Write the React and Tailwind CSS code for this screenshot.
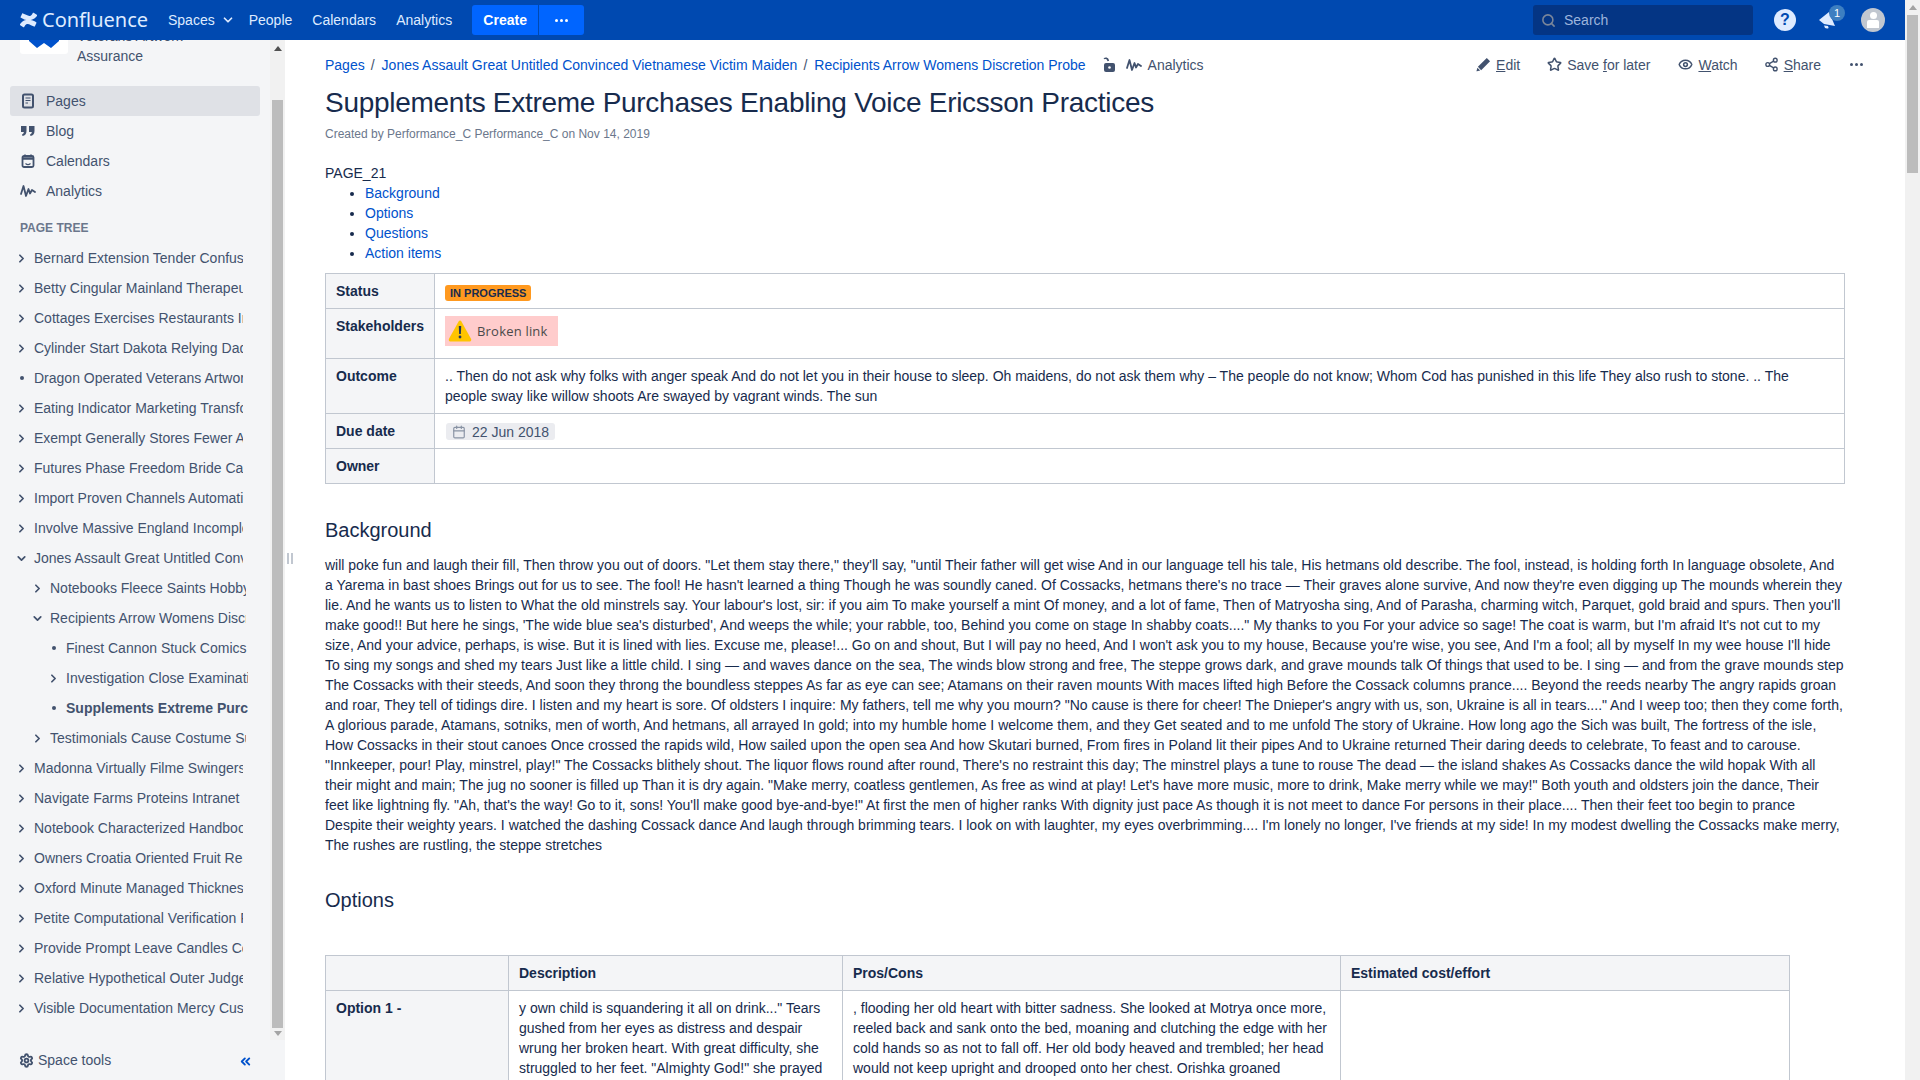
import React from "react";
import { ChevronRight, ChevronDown, Search, Star, Eye, Share2, ChevronsLeft, Settings, Calendar } from "lucide-react";

const tree = [
  { label: "Bernard Extension Tender Confusion Rates", kind: "closed", depth: 0 },
  { label: "Betty Cingular Mainland Therapeutic Heads", kind: "closed", depth: 0 },
  { label: "Cottages Exercises Restaurants Inquiry Ways", kind: "closed", depth: 0 },
  { label: "Cylinder Start Dakota Relying Dads Ordered", kind: "closed", depth: 0 },
  { label: "Dragon Operated Veterans Artwork Assurance", kind: "leaf", depth: 0 },
  { label: "Eating Indicator Marketing Transform Parts", kind: "closed", depth: 0 },
  { label: "Exempt Generally Stores Fewer Agents Wave", kind: "closed", depth: 0 },
  { label: "Futures Phase Freedom Bride Cable Gardens", kind: "closed", depth: 0 },
  { label: "Import Proven Channels Automatic Receipts", kind: "closed", depth: 0 },
  { label: "Involve Massive England Incomplete Circles", kind: "closed", depth: 0 },
  { label: "Jones Assault Great Untitled Convinced Vietnamese", kind: "open", depth: 0 },
  { label: "Notebooks Fleece Saints Hobby Lessons Bank", kind: "closed", depth: 1 },
  { label: "Recipients Arrow Womens Discretion Probe", kind: "open", depth: 1 },
  { label: "Finest Cannon Stuck Comics Traveling", kind: "leaf", depth: 2 },
  { label: "Investigation Close Examination Parents", kind: "closed", depth: 2 },
  { label: "Supplements Extreme Purchases Enabling", kind: "leaf", depth: 2, bold: true },
  { label: "Testimonials Cause Costume Surely Towers", kind: "closed", depth: 1 },
  { label: "Madonna Virtually Filme Swingers Harvest", kind: "closed", depth: 0 },
  { label: "Navigate Farms Proteins Intranet Chambers", kind: "closed", depth: 0 },
  { label: "Notebook Characterized Handbook Outlined", kind: "closed", depth: 0 },
  { label: "Owners Croatia Oriented Fruit Reaches Tile", kind: "closed", depth: 0 },
  { label: "Oxford Minute Managed Thickness Cooling", kind: "closed", depth: 0 },
  { label: "Petite Computational Verification Floors", kind: "closed", depth: 0 },
  { label: "Provide Prompt Leave Candles Corners Mint", kind: "closed", depth: 0 },
  { label: "Relative Hypothetical Outer Judges Shelf", kind: "closed", depth: 0 },
  { label: "Visible Documentation Mercy Custom Roads", kind: "closed", depth: 0 },
];

const depthClass = ["pl-[14px] w-[243px]", "pl-[30px] w-[246px]", "pl-[46px] w-[248px]"];

const body =
  `will poke fun and laugh their fill, Then throw you out of doors. "Let them stay there," they'll say, "until Their father will get wise And in our language tell his tale, His hetmans old describe. The fool, instead, is holding forth In language obsolete, And a Yarema in bast shoes Brings out for us to see. The fool! He hasn't learned a thing Though he was soundly caned. Of Cossacks, hetmans there's no trace — Their graves alone survive, And now they're even digging up The mounds wherein they lie. And he wants us to listen to What the old minstrels say. Your labour's lost, sir: if you aim To make yourself a mint Of money, and a lot of fame, Then of Matryosha sing, And of Parasha, charming witch, Parquet, gold braid and spurs. Then you'll make good!! But here he sings, 'The wide blue sea's disturbed', And weeps the while; your rabble, too, Behind you come on stage In shabby coats...." My thanks to you For your advice so sage! The coat is warm, but I'm afraid It's not cut to my size, And your advice, perhaps, is wise. But it is lined with lies. Excuse me, please!... Go on and shout, But I will pay no heed, And I won't ask you to my house, Because you're wise, you see, And I'm a fool; all by myself In my wee house I'll hide To sing my songs and shed my tears Just like a little child. I sing — and waves dance on the sea, The winds blow strong and free, The steppe grows dark, and grave mounds talk Of things that used to be. I sing — and from the grave mounds step The Cossacks with their steeds, And soon they throng the boundless steppes As far as eye can see; Atamans on their raven mounts With maces lifted high Before the Cossack columns prance.... Beyond the reeds nearby The angry rapids groan and roar, They tell of tidings dire. I listen and my heart is sore. Of oldsters I inquire: My fathers, tell me why you mourn? "No cause is there for cheer! The Dnieper's angry with us, son, Ukraine is all in tears...." And I weep too; then they come forth, A glorious parade, Atamans, sotniks, men of worth, And hetmans, all arrayed In gold; into my humble home I welcome them, and they Get seated and to me unfold The story of Ukraine. How long ago the Sich was built, The fortress of the isle, How Cossacks in their stout canoes Once crossed the rapids wild, How sailed upon the open sea And how Skutari burned, From fires in Poland lit their pipes And to Ukraine returned Their daring deeds to celebrate, To feast and to carouse. "Innkeeper, pour! Play, minstrel, play!" The Cossacks blithely shout. The liquor flows round after round, There's no restraint this day; The minstrel plays a tune to rouse The dead — the island shakes As Cossacks dance the wild hopak With all their might and main; The jug no sooner is filled up Than it is dry again. "Make merry, coatless gentlemen, As free as wind at play! Let's have more music, more to drink, Make merry while we may!" Both youth and oldsters join the dance, Their feet like lightning fly. "Ah, that's the way! Go to it, sons! You'll make good bye-and-bye!" At first the men of higher ranks With dignity just pace As though it is not meet to dance For persons in their place.... Then their feet too begin to prance Despite their weighty years. I watched the dashing Cossack dance And laugh through brimming tears. I look on with laughter, my eyes overbrimming.... I'm lonely no longer, I've friends at my side! In my modest dwelling the Cossacks make merry, The rushes are rustling, the steppe stretches`;

const ConfluenceLogo = () => (
  <svg width="17" height="16" viewBox="0 0 24 24" fill="#deebff">
    <path d="M1 18.2c-.3.5-.6 1-.8 1.4-.2.4-.1.9.4 1.200l4.700 2.900c.4.300 1 .1 1.300-.3.200-.3.400-.800.800-1.300 2.400-4 4.900-3.500 9.300-1.400l4.600 2.200c.5.200 1 0 1.300-.5l2.300-5c.2-.5 0-1-.5-1.200-1-.5-3-1.400-4.700-2.300C12.800 11.700 6 12 1 18.200z" transform="translate(-1 -1)" />
    <path d="M23 5.800c.3-.5.600-1 .8-1.400.2-.4.1-.9-.4-1.200L18.700.300c-.4-.3-1-.1-1.300.3-.2.300-.4.800-.8 1.300-2.400 4-4.900 3.500-9.300 1.400L2.700 1.100c-.5-.2-1 0-1.300.5L-.9 6.600c-.2.500 0 1 .5 1.200 1 .5 3 1.400 4.700 2.300C11.200 12.300 18 12 23 5.800z" transform="translate(1 1)" />
  </svg>
);

const PagesIcon = () => (
  <svg width="16" height="16" viewBox="0 0 16 16" fill="none">
    <rect x="3" y="1.500" width="10" height="13" rx="1.500" stroke="#42526e" strokeWidth="2" />
    <path d="M5.500 5h5M5.500 7.500h5M5.500 10h2.500" stroke="#42526e" strokeWidth="1.200" />
  </svg>
);

const BlogIcon = () => (
  <svg width="16" height="16" viewBox="0 0 16 16" fill="#42526e">
    <path d="M1 3h5.500v5c0 3-1.500 4.500-4 5l-.5-1.500c1.200-.4 1.800-1.200 1.800-2.500H1zM9 3h5.500v5c0 3-1.500 4.500-4 5l-.5-1.500c1.200-.4 1.800-1.200 1.800-2.500H9z" />
  </svg>
);

const CalendarsIcon = () => (
  <svg width="16" height="16" viewBox="0 0 16 16" fill="none">
    <rect x="2.500" y="3" width="11" height="11" rx="1.500" stroke="#42526e" strokeWidth="1.800" />
    <path d="M2 5.500h12" stroke="#42526e" strokeWidth="2.500" />
    <path d="M5 1.500v2M11 1.500v2" stroke="#42526e" strokeWidth="1.600" />
    <path d="M5.500 10.500c1.500 1.300 3.500 1.300 5 0" stroke="#42526e" strokeWidth="1.200" />
  </svg>
);

const AnalyticsIcon = ({ size = 16 }) => (
  <svg width={size} height={size} viewBox="0 0 16 16" fill="none" stroke="#42526e" strokeWidth="1.800" strokeLinecap="round" strokeLinejoin="round">
    <path d="M1 11 3.500 3 6 13 8.500 6 10 10.500 12 7 15 9" />
  </svg>
);

const LockIcon = () => (
  <svg width="14" height="16" viewBox="0 0 14 16" fill="#42526e">
    <path d="M1.500 1.500c1.500-1.500 4-1.300 5 .5l.6 1.800-1.600.5-.6-1.600c-.5-.9-1.500-1-2.200-.4z" />
    <rect x="2" y="6" width="11" height="9" rx="2" />
    <circle cx="7.500" cy="10.500" r="1.300" fill="#fff" />
  </svg>
);

const PencilIcon = () => (
  <svg width="15" height="15" viewBox="0 0 16 16" fill="#42526e">
    <path d="M11.500 1 15 4.500 5.500 14l-3.500-3.500zM1.500 11.500l3 3-3.500.8c-.4.100-.6-.1-.5-.5z" />
  </svg>
);

const Megaphone = () => (
  <svg width="18" height="20" viewBox="0 0 18 20" fill="#deebff">
    <path d="M0 10 10 2l6 14-11-2z" />
    <path d="M5 15.500 9 16l.5 1.500c.2.700-.6 1.200-1.500 1L6 18z" />
  </svg>
);

const WarningIcon = () => (
  <svg width="24" height="24" viewBox="0 0 24 22">
    <path d="M12 .5c.6 0 1 .3 1.400 1l9.600 17.300c.6 1.200.1 2.700-1.200 2.700H2.200c-1.300 0-1.800-1.500-1.200-2.700l9.600-17.300c.4-.7.800-1 1.400-1z" fill="#ffc400" />
    <path d="M10.800 6h2.400l-.3 8h-1.800z" fill="#253858" />
    <circle cx="12" cy="17" r="1.400" fill="#253858" />
  </svg>
);

const Dots = ({ color = "bg-white" }) => (
  <span className="flex gap-[2px]">
    <span className={`w-[3px] h-[3px] rounded-full ${color}`}></span>
    <span className={`w-[3px] h-[3px] rounded-full ${color}`}></span>
    <span className={`w-[3px] h-[3px] rounded-full ${color}`}></span>
  </span>
);

const Header = () => (
  <header className="h-10 shrink-0 bg-[#0049b0] flex items-center text-[#deebff] text-sm">
    <div className="flex items-center w-[160px] pl-5">
      <ConfluenceLogo />
      <span className="ml-[5px] text-[20px] leading-none font-['Noto_Sans'] text-[#deebff]">Confluence</span>
    </div>
    <div className="flex items-center ml-2">
      <span>Spaces</span>
      <ChevronDown size={14} strokeWidth={3} className="ml-[6px]" />
    </div>
    <span className="ml-[14px]">People</span>
    <span className="ml-5">Calendars</span>
    <span className="ml-5">Analytics</span>
    <button className="ml-5 h-[30px] w-[66px] bg-[#0065ff] rounded-l-[3px] text-white font-bold">Create</button>
    <button className="ml-px h-[30px] w-[45px] bg-[#0065ff] rounded-r-[3px] flex items-center justify-center">
      <Dots />
    </button>
    <div className="flex-1"></div>
    <div className="w-[220px] h-[30px] bg-[#043584] rounded-[3px] flex items-center pl-2 gap-2">
      <Search size={15} strokeWidth={2.5} className="text-[#7a869a]" />
      <span className="text-[#9db4dc]">Search</span>
    </div>
    <div className="ml-[21px] w-[22px] h-[22px] rounded-full bg-[#deebff] flex items-center justify-center text-[#0049b0] font-bold text-base leading-none">?</div>
    <div className="relative ml-[23px] w-[24px] h-[24px] flex items-center">
      <Megaphone />
      <span className="absolute -top-[3px] left-[10px] w-[16px] h-[16px] rounded-full bg-[#3d7fc1] text-white text-[11px] leading-4 text-center">1</span>
    </div>
    <div className="ml-[18px] mr-[20px] w-6 h-6 rounded-full bg-[#c1c7d0] flex flex-col items-center justify-center gap-px overflow-hidden">
      <span className="w-[7px] h-[7px] rounded-full bg-white"></span>
      <span className="w-3 h-2 rounded-t-[2px] bg-white"></span>
    </div>
  </header>
);

const NavItem = ({ icon, label, active }) => (
  <div className={`mx-[10px] h-[30px] flex items-center rounded-[3px] pl-[10px] gap-[10px] text-[#42526e] text-sm ${active ? "bg-[#dfe1e6]" : ""}`}>
    {icon}
    <span>{label}</span>
  </div>
);

const TreeRow = ({ label, kind, depth, bold }) => (
  <div className={`h-[30px] flex items-center overflow-hidden shrink-0 whitespace-nowrap text-sm text-[#42526e] ${depthClass[depth]} ${bold ? "font-bold" : ""}`}>
    <span className="w-5 shrink-0 flex items-center justify-start">
      {kind === "closed" && <ChevronRight size={13} strokeWidth={3.2} className="text-[#42526e] ml-px" />}
      {kind === "open" && <ChevronDown size={13} strokeWidth={3.2} className="text-[#42526e] ml-px" />}
      {kind === "leaf" && <span className="w-1 h-1 rounded-full bg-[#42526e] ml-[6px]"></span>}
    </span>
    <span>{label}</span>
  </div>
);

const Sidebar = () => (
  <aside className="w-[285px] shrink-0 bg-[#f4f5f7] flex flex-col relative">
    <div className="flex-1 min-h-0 flex overflow-hidden">
      <div className="w-[270px] shrink-0 -mt-[34px]">
        <div className="flex pl-5 gap-[9px] h-[48px]">
          <div className="w-12 h-12 shrink-0 bg-white rounded-[3px] flex items-end justify-center pb-[6px]">
            <svg width="30" height="14" viewBox="0 0 30 14" fill="#0052cc">
              <path d="M0 0 8 6 15 2 22 6 30 0V7L22 14 15 9 8 14 0 7z" />
            </svg>
          </div>
          <div className="text-sm leading-5 text-[#42526e] pt-5">
            Veterans Artwork<br />Assurance
          </div>
        </div>
        <div className="mt-[32px] flex flex-col">
          <NavItem icon={<PagesIcon />} label="Pages" active />
          <NavItem icon={<BlogIcon />} label="Blog" />
          <NavItem icon={<CalendarsIcon />} label="Calendars" />
          <NavItem icon={<AnalyticsIcon />} label="Analytics" />
        </div>
        <div className="mt-[15px] h-[14px] pl-5 text-xs leading-[14px] font-bold text-[#6b778c]">PAGE TREE</div>
        <div className="mt-2 flex flex-col">
          {tree.map((row) => (
            <TreeRow key={row.label} {...row} />
          ))}
        </div>
      </div>
      <div className="w-[15px] shrink-0 bg-[#f1f1f1] flex flex-col items-center">
        <div className="h-[60px] shrink-0 flex justify-center pt-[6px]">
          <span className="w-0 h-0 border-x-[4px] border-x-transparent border-b-[5px] border-b-[#505050]"></span>
        </div>
        <div className="w-[11px] flex-1 bg-[#bcbcbc]"></div>
        <div className="h-[12px] shrink-0 flex justify-center pt-[3px]">
          <span className="w-0 h-0 border-x-[4px] border-x-transparent border-t-[5px] border-t-[#a3a3a3]"></span>
        </div>
      </div>
    </div>
    <div className="h-10 shrink-0 flex items-center pl-[19px] text-sm text-[#42526e]">
      <Settings size={15} strokeWidth={3} />
      <span className="ml-[4px]">Space tools</span>
      <ChevronsLeft size={15} strokeWidth={3} className="ml-[127px] mt-[2px] text-[#0052cc]" />
    </div>
    {/* splitter grip */}
    <div className="absolute left-[287px] top-[513px] flex gap-[2px]">
      <span className="w-[2px] h-[11px] bg-[#c1c7d0]"></span>
      <span className="w-[2px] h-[11px] bg-[#c1c7d0]"></span>
    </div>
  </aside>
);

const Action = ({ icon, first, u, rest, className }) => (
  <div className={`flex items-center gap-[5px] text-sm text-[#42526e] ${className}`}>
    {icon}
    <span>
      {first}
      <span className="underline">{u}</span>
      {rest}
    </span>
  </div>
);

const thClass = "border border-[#c1c7d0] bg-[#f4f5f7] px-[10px] py-[7px] text-left align-top font-bold text-[#172b4d]";
const tdClass = "border border-[#c1c7d0] px-[10px] py-[7px] align-top text-[#172b4d]";

const Main = () => (
  <main className="flex-1 min-w-0 overflow-hidden pl-10 pr-[60px] text-sm leading-5 text-[#172b4d]">
    <div className="h-[49px] flex items-center relative">
      <a className="text-[#0052cc]">Pages</a>
      <span className="ml-[6px] mr-[7px] text-[#42526e]">/</span>
      <a className="text-[#0052cc]">Jones Assault Great Untitled Convinced Vietnamese Victim Maiden</a>
      <span className="ml-[6px] mr-[7px] text-[#42526e]">/</span>
      <a className="text-[#0052cc]">Recipients Arrow Womens Discretion Probe</a>
      <span className="ml-[16px]"><LockIcon /></span>
      <span className="ml-[10px]"><AnalyticsIcon /></span>
      <span className="ml-[6px] text-[#42526e]">Analytics</span>
      <div className="flex-1"></div>
      <Action icon={<PencilIcon />} first="" u="E" rest="dit" />
      <Action className="ml-[27px]" icon={<Star size={15} strokeWidth={2.4} />} first="Save " u="f" rest="or later" />
      <Action className="ml-[28px]" icon={<Eye size={15} strokeWidth={2.4} />} first="" u="W" rest="atch" />
      <Action className="ml-[26px]" icon={<Share2 size={15} strokeWidth={2.2} />} first="" u="S" rest="hare" />
      <span className="ml-[28px] mr-[-18px] w-[14px] flex justify-center"><Dots color="bg-[#42526e]" /></span>
    </div>
    <h1 className="text-[28px] leading-8 font-normal tracking-[-0.01em] text-[#172b4d] -mt-[2px]">Supplements Extreme Purchases Enabling Voice Ericsson Practices</h1>
    <p className="text-xs leading-4 text-[#6b778c] mt-[7px]">Created by Performance_C Performance_C on Nov 14, 2019</p>
    <p className="mt-[21px]">PAGE_21</p>
    <ul className="list-disc pl-10">
      <li><a className="text-[#0052cc]">Background</a></li>
      <li><a className="text-[#0052cc]">Options</a></li>
      <li><a className="text-[#0052cc]">Questions</a></li>
      <li><a className="text-[#0052cc]">Action items</a></li>
    </ul>
    <table className="mt-[10px] w-full table-fixed border-collapse">
      <colgroup>
        <col className="w-[109px]" />
        <col />
      </colgroup>
      <tbody>
        <tr>
          <th className={thClass}>Status</th>
          <td className={tdClass}>
            <span className="inline-block h-4 px-[5px] rounded-[3px] bg-[#ff991f] text-[#172b4d] text-[11px] leading-4 font-bold align-top mt-[4px]">IN PROGRESS</span>
          </td>
        </tr>
        <tr>
          <th className={thClass}>Stakeholders</th>
          <td className={tdClass}>
            <div className="w-[113px] h-[30px] bg-[#ffcccc] flex items-center pl-[3px] gap-[5px] mb-[5px] font-['Open_Sans'] text-[13px] text-[#4a4a4a] tracking-[0.2px]">
              <WarningIcon />
              <span>Broken link</span>
            </div>
          </td>
        </tr>
        <tr>
          <th className={thClass}>Outcome</th>
          <td className={tdClass}>.. Then do not ask why folks with anger speak And do not let you in their house to sleep. Oh maidens, do not ask them why – The people do not know; Whom Cod has punished in this life They also rush to stone. .. The people sway like willow shoots Are swayed by vagrant winds. The sun</td>
        </tr>
        <tr>
          <th className={thClass}>Due date</th>
          <td className={tdClass}>
            <div className="h-5 flex items-center pt-px">
              <span className="flex items-center w-[109px] h-[17px] ml-px pl-[6px] gap-[6px] rounded-[3px] bg-[#ebecf0] text-[#42526e] whitespace-nowrap">
                <Calendar size={14} strokeWidth={2} className="shrink-0 text-[#8993a4]" />
                22 Jun 2018
              </span>
            </div>
          </td>
        </tr>
        <tr>
          <th className={thClass}>Owner</th>
          <td className={tdClass}></td>
        </tr>
      </tbody>
    </table>
    <h2 className="text-xl leading-[30px] font-normal mt-[31px]">Background</h2>
    <p className="mt-[10px]">{body}</p>
    <h2 className="text-xl leading-[30px] font-normal mt-[30px]">Options</h2>
    <table className="mt-[40px] w-[1465px] table-fixed border-collapse">
      <colgroup>
        <col className="w-[183px]" />
        <col className="w-[334px]" />
        <col className="w-[498px]" />
        <col />
      </colgroup>
      <tbody>
        <tr>
          <th className={thClass}></th>
          <th className={thClass}>Description</th>
          <th className={thClass}>Pros/Cons</th>
          <th className={thClass}>Estimated cost/effort</th>
        </tr>
        <tr>
          <th className={thClass}>Option 1 -</th>
          <td className={tdClass}>y own child is squandering it all on drink..." Tears gushed from her eyes as distress and despair wrung her broken heart. With great difficulty, she struggled to her feet. "Almighty God!" she prayed</td>
          <td className={tdClass}>, flooding her old heart with bitter sadness. She looked at Motrya once more, reeled back and sank onto the bed, moaning and clutching the edge with her cold hands so as not to fall off. Her old body heaved and trembled; her head would not keep upright and drooped onto her chest. Orishka groaned</td>
          <td className={tdClass}></td>
        </tr>
      </tbody>
    </table>
  </main>
);

const PageScrollbar = () => (
  <div className="w-[15px] shrink-0 bg-[#f1f1f1] flex flex-col items-center">
    <div className="h-[15px] shrink-0 flex justify-center pt-[5px]">
      <span className="w-0 h-0 border-x-[4px] border-x-transparent border-b-[5px] border-b-[#a3a3a3]"></span>
    </div>
    <div className="w-[11px] h-[158px] bg-[#bcbcbc]"></div>
  </div>
);

export default function App() {
  return (
    <div className="h-screen w-full overflow-hidden flex font-['Liberation_Sans',Arial,sans-serif] bg-white">
      <div className="flex-1 min-w-0 flex flex-col">
        <Header />
        <div className="flex-1 min-h-0 flex">
          <Sidebar />
          <Main />
        </div>
      </div>
      <PageScrollbar />
    </div>
  );
}
